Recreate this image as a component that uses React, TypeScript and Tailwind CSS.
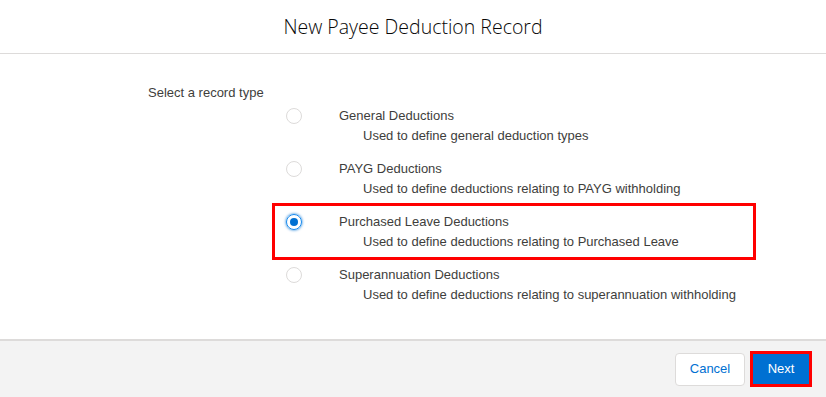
const options = [
  { label: "General Deductions", desc: "Used to define general deduction types" },
  { label: "PAYG Deductions", desc: "Used to define deductions relating to PAYG withholding" },
  { label: "Purchased Leave Deductions", desc: "Used to define deductions relating to Purchased Leave" },
  { label: "Superannuation Deductions", desc: "Used to define deductions relating to superannuation withholding" },
];

const selected = 2;

export default function App() {
  return (
    <div className="w-[826px] h-[397px] flex flex-col bg-white text-[#3e3e3c] font-['Liberation_Sans',Arial,sans-serif] overflow-hidden">
      {/* Header */}
      <div className="h-[54px] shrink-0 flex items-center justify-center border-b border-[#dddbda]">
        <h2 className="text-[19.5px] font-light text-[#080707] font-['Open_Sans',sans-serif] pt-[1px]">
          New Payee Deduction Record
        </h2>
      </div>

      {/* Body */}
      <div className="flex-1 flex flex-col pt-[30px]">
        <div className="ml-[148px] text-[13px] leading-[18px]">Select a record type</div>
        <div className="ml-[274px] -mt-[3px] w-[480px] flex flex-col">
          {options.map((o, i) => (
            <div
              key={o.label}
              className={
                "h-[53px] flex pl-[12px] pt-[7px] " +
                (i === selected ? "outline-[3px] -outline-offset-1 outline-[#ff0000]" : "")
              }
            >
              <div className="h-[20px] flex items-center">
                {i === selected ? (
                  <span className="w-[16px] h-[16px] rounded-full border border-[#1589ee] shadow-[0_0_3px_#0070d2] flex items-center justify-center">
                    <span className="w-[8px] h-[8px] rounded-full bg-[#0070d2]" />
                  </span>
                ) : (
                  <span className="w-[16px] h-[16px] rounded-full border border-[#dddbda] bg-white" />
                )}
              </div>
              <div className="ml-[37px] flex flex-col text-[13px] leading-[20px]">
                <span>{o.label}</span>
                <span className="ml-[24px]">{o.desc}</span>
              </div>
            </div>
          ))}
        </div>
      </div>

      {/* Footer */}
      <div className="h-[58px] shrink-0 bg-[#f3f3f3] border-t-2 border-[#dddbda] flex items-center justify-end gap-[5px] pr-[14px]">
        <button className="h-[33px] w-[70px] rounded-[4px] border border-[#dddbda] bg-white text-[13px] text-[#0070d2]">
          Cancel
        </button>
        <span className="border-[3px] border-[#ff0000] flex">
          <button className="h-[30px] w-[56px] bg-[#0070d2] text-[13px] text-white">
            Next
          </button>
        </span>
      </div>
    </div>
  );
}
